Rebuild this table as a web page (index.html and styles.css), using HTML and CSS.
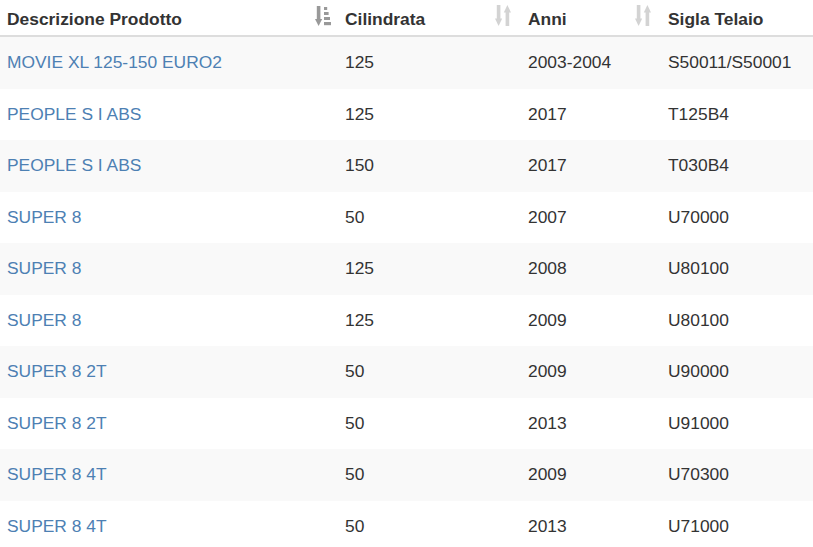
FILE: index.html
```html
<!DOCTYPE html>
<html lang="it">
<head>
<meta charset="utf-8">
<title>Prodotti</title>
<link rel="stylesheet" href="styles.css">
</head>
<body>
<table class="grid">
  <colgroup>
    <col class="c1"><col class="c2"><col class="c3"><col class="c4">
  </colgroup>
  <thead>
    <tr>
      <th><div class="th-in"><span>Descrizione Prodotto</span>
        <svg class="ico ico-active" width="16" height="20" viewBox="0 0 16 20"><rect x="1.8" y="0" width="3.6" height="14"/><polygon points="0,13 7.2,13 3.6,20"/><rect x="9" y="1" width="3.2" height="3"/><rect x="9" y="6" width="4.6" height="3"/><rect x="9" y="11" width="6" height="3"/><rect x="9" y="16" width="7" height="3.2"/></svg>
      </div></th>
      <th><div class="th-in"><span>Cilindrata</span>
        <svg class="ico ico-off" width="16" height="21" viewBox="0 0 16 21"><rect x="1.8" y="0" width="3.6" height="14.5"/><polygon points="0,13.5 7.2,13.5 3.6,21"/><polygon points="8.8,7.5 16,7.5 12.4,0"/><rect x="10.6" y="6.5" width="3.6" height="14.5"/></svg>
      </div></th>
      <th><div class="th-in"><span>Anni</span>
        <svg class="ico ico-off" width="16" height="21" viewBox="0 0 16 21"><rect x="1.8" y="0" width="3.6" height="14.5"/><polygon points="0,13.5 7.2,13.5 3.6,21"/><polygon points="8.8,7.5 16,7.5 12.4,0"/><rect x="10.6" y="6.5" width="3.6" height="14.5"/></svg>
      </div></th>
      <th><div class="th-in"><span>Sigla Telaio</span></div></th>
    </tr>
  </thead>
  <tbody>
    <tr><td><a href="#">MOVIE XL 125-150 EURO2</a></td><td>125</td><td>2003-2004</td><td>S50011/S50001</td></tr>
    <tr><td><a href="#">PEOPLE S I ABS</a></td><td>125</td><td>2017</td><td>T125B4</td></tr>
    <tr><td><a href="#">PEOPLE S I ABS</a></td><td>150</td><td>2017</td><td>T030B4</td></tr>
    <tr><td><a href="#">SUPER 8</a></td><td>50</td><td>2007</td><td>U70000</td></tr>
    <tr><td><a href="#">SUPER 8</a></td><td>125</td><td>2008</td><td>U80100</td></tr>
    <tr><td><a href="#">SUPER 8</a></td><td>125</td><td>2009</td><td>U80100</td></tr>
    <tr><td><a href="#">SUPER 8 2T</a></td><td>50</td><td>2009</td><td>U90000</td></tr>
    <tr><td><a href="#">SUPER 8 2T</a></td><td>50</td><td>2013</td><td>U91000</td></tr>
    <tr><td><a href="#">SUPER 8 4T</a></td><td>50</td><td>2009</td><td>U70300</td></tr>
    <tr><td><a href="#">SUPER 8 4T</a></td><td>50</td><td>2013</td><td>U71000</td></tr>
  </tbody>
</table>
</body>
</html>
```
FILE: styles.css
```css
html, body {
  margin: 0;
  padding: 0;
  background: #fff;
}
body {
  font-family: "Liberation Sans", Arial, sans-serif;
  font-size: 17.4px;
  color: #333;
  overflow: hidden;
}
.grid {
  width: 813px;
  table-layout: fixed;
  border-collapse: collapse;
  border-spacing: 0;
}
.c1 { width: 337px; }
.c2 { width: 183px; }
.c3 { width: 140px; }
.c4 { width: 153px; }
.grid th {
  text-align: left;
  font-weight: bold;
  line-height: 25px;
  padding: 6.5px 6px 3.5px 8px;
  border-bottom: 2px solid #ddd;
  vertical-align: top;
}
.th-in {
  display: flex;
  justify-content: space-between;
  align-items: flex-start;
  height: 25px;
}
.ico {
  flex: none;
}
.ico-active {
  fill: #999;
  margin-top: -0.5px;
}
.ico-off {
  fill: #d3d3d3;
  margin-right: 3px;
  margin-top: -1.5px;
}
.grid td {
  line-height: 25px;
  padding: 13.25px 8px;
  white-space: nowrap;
  overflow: hidden;
}
.grid td:first-child, .grid th:first-child {
  padding-left: 7px;
}
.grid tbody tr:nth-child(odd) td {
  background: #f9f9f9;
}
.grid a {
  color: #4d80b3;
  text-decoration: none;
}
```
